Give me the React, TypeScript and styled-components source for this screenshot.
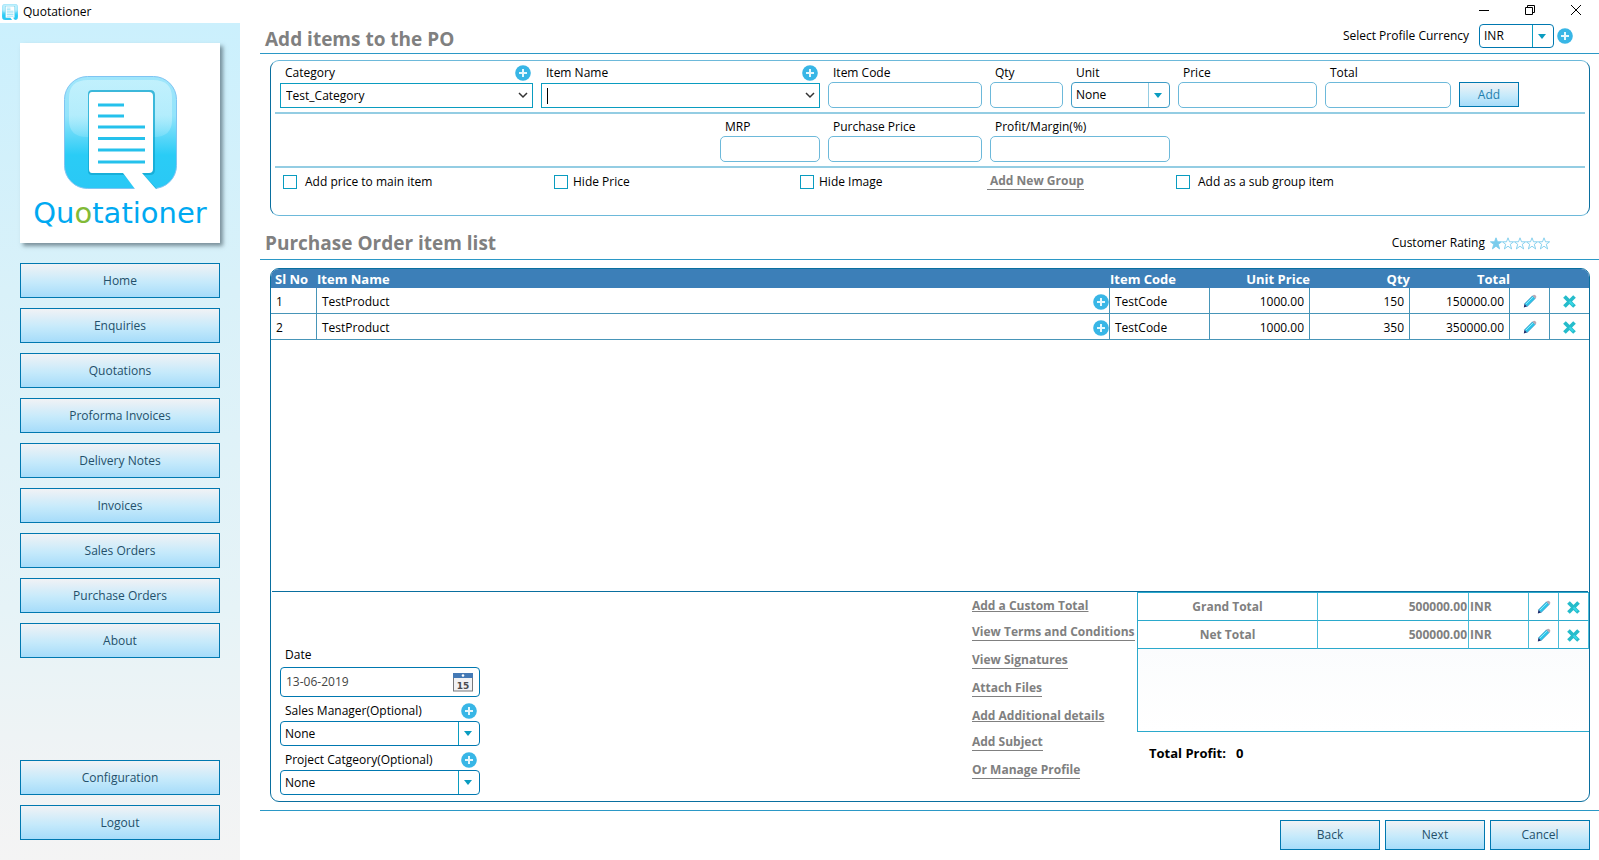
import React from "react";
import styled, { createGlobalStyle, css } from "styled-components";

const c = {
  edge: "#0a6f9f",
  rule: "#2b98c6",
  split: "#94cde3",
  combo: "#0a9cc0",
  field: "#6db9da",
  button: "#0078b0",
  grey: "#808080",
  head: "#3c7fb8",
  cell: "#4795b8",
  total: "#2ba9cc",
};

const Global = createGlobalStyle`
  *, *::before, *::after { box-sizing: border-box; }
  body { margin: 0; background: #fff; }
  body, button, input, select, table {
    font-family: "Open Sans", "Noto Sans", sans-serif;
    font-size: 12px;
    line-height: 16px;
    color: #000;
  }
  button { cursor: pointer; }
`;

/* ---------- shell ---------- */

const Window = styled.div`
  min-height: 100vh;
  display: flex;
  flex-direction: column;
`;

const TitleBar = styled.header`
  height: 23px;
  display: flex;
  justify-content: space-between;
  padding-left: 2px;
`;

const TitleText = styled.span`
  display: flex;
  align-items: center;
  gap: 5px;
`;

const WindowButtons = styled.div`
  display: flex;
`;

const WindowButton = styled.button`
  width: 46px;
  height: 20px;
  padding: 0;
  border: 0;
  background: none;
  display: flex;
  align-items: center;
  justify-content: center;
`;

const Body = styled.div`
  flex: 1;
  display: flex;
`;

const Sidebar = styled.aside`
  flex: 0 0 240px;
  padding: 20px;
  display: flex;
  flex-direction: column;
  background: linear-gradient(#cbf0fd 0%, #d9f1f9 32%, #e6f3f7 70%, #eef3f5 85%, #f4f4f4 100%);
`;

const LogoCard = styled.div`
  height: 200px;
  margin-bottom: 20px;
  padding-top: 33px;
  display: flex;
  flex-direction: column;
  align-items: center;
  background: #fff;
  box-shadow: 3px 3px 4px rgba(60, 80, 90, 0.6);
`;

const WordMark = styled.div`
  font-family: "DejaVu Sans", sans-serif;
  font-size: 29px;
  line-height: 36px;
  margin-top: 6px;
  color: #00a9f1;
`;

const Green = styled.span`
  color: #82ba37;
`;

const Nav = styled.nav`
  flex: 1;
  display: flex;
  flex-direction: column;
  gap: 10px;
`;

const NavSpacer = styled.div`
  flex: 1;
`;

const PushButton = styled.button<{ $accent?: boolean }>`
  border: 1px solid ${c.button};
  padding: 0;
  background: linear-gradient(#f1f2f5 0%, #c6eafb 55%, #a6dcfa 100%);
  color: ${(p) => (p.$accent ? "#1f7fae" : "#24506a")};
`;

const NavButton = styled(PushButton)`
  height: 35px;
  flex: none;
`;

const Main = styled.main`
  flex: 1;
  min-width: 0;
  padding-left: 20px;
  display: flex;
  flex-direction: column;
`;

const SectionHead = styled.div<{ $tall?: boolean }>`
  height: ${(p) => (p.$tall ? 44 : 31)}px;
  padding: ${(p) => (p.$tall ? 0 : 1)}px 26px 0 5px;
  display: flex;
  align-items: ${(p) => (p.$tall ? "flex-end" : "center")};
  border-bottom: 1px solid ${c.rule};
`;

const Title = styled.h2`
  flex: 1;
  margin: 0;
  font-size: 19px;
  line-height: 32px;
  font-weight: 700;
  color: ${c.grey};
`;

const HeadTools = styled.div`
  align-self: flex-start;
  display: flex;
  align-items: center;
  gap: 3px;
`;

const HeadLabel = styled.label`
  margin-right: 7px;
`;

const Rating = styled.div`
  display: flex;
  align-items: center;
  gap: 5px;
  height: 32px;
  margin-right: 23px;
`;

const Stars = styled.span`
  display: flex;
`;

/* ---------- form controls ---------- */

const Label = styled.label`
  padding-left: 5px;
  line-height: 16px;
`;

const LabelRow = styled.div`
  height: 21px;
  padding: 2px 2px 0 0;
  display: flex;
  align-items: center;
  justify-content: space-between;
`;

const Field = styled.div`
  min-width: 0;
  display: flex;
  flex-direction: column;
`;

const TextInput = styled.input`
  width: 100%;
  min-width: 0;
  height: 26px;
  padding: 0 5px;
  border: 1px solid ${c.field};
  border-radius: 5px;
  background: #fff;
  outline: none;
`;

const Combo = styled.div`
  height: 25px;
  margin-top: 1px;
  display: flex;
  align-items: center;
  padding: 0 4px 0 5px;
  border: 1px solid ${c.combo};
  background: #fff;
`;

const bare = css`
  flex: 1;
  min-width: 0;
  border: 0;
  padding: 0;
  background: none;
  outline: none;
  appearance: none;
`;

const BareInput = styled.input`
  ${bare}
`;

const BareSelect = styled.select`
  ${bare}
  align-self: stretch;
`;

const Caret = styled.span`
  width: 1px;
  height: 16px;
  background: #000;
`;

const IconButton = styled.button`
  border: 0;
  padding: 0;
  background: none;
  display: inline-flex;
  align-items: center;
  justify-content: center;
  flex: none;
`;

const DropBox = styled.div<{ $w?: number; $h?: number; $edge?: string; $bar?: string }>`
  width: ${(p) => (p.$w ? p.$w + "px" : "100%")};
  height: ${(p) => p.$h ?? 25}px;
  display: flex;
  align-items: center;
  padding-left: 4px;
  border: 1px solid ${(p) => p.$edge ?? c.button};
  border-radius: 4px;
  background: #fff;

  > span {
    width: 21px;
    align-self: stretch;
    display: flex;
    align-items: center;
    justify-content: center;
    padding-right: 2px;
    border-left: 1px solid ${(p) => p.$bar ?? c.combo};
    pointer-events: none;
  }
`;

/* ---------- add item panel ---------- */

const AddPanel = styled.form`
  margin: 6px 9px 0 10px;
  height: 156px;
  padding: 0 4px;
  border: 1px solid ${c.edge};
  border-top-color: ${c.field};
  border-bottom-color: ${c.field};
  border-radius: 9px;
`;

const FieldGrid = styled.div<{ $first?: boolean }>`
  height: ${(p) => (p.$first ? 53 : 54)}px;
  padding: ${(p) => (p.$first ? 0 : 1)}px 0 0 5px;
  display: grid;
  grid-template-columns: 253fr 279fr 154fr 73fr 99fr 139fr 126fr 60fr 58fr;
  column-gap: 8px;
  align-items: start;
  border-bottom: 2px solid ${c.split};
`;

const MrpField = styled(Field)`
  grid-column: 2;
  justify-self: end;
  width: 100px;
`;

const ProfitField = styled(Field)`
  grid-column: 4 / span 2;
`;

const AddButton = styled(PushButton)`
  height: 25px;
  margin-top: 21px;
`;

const OptionGrid = styled.div`
  height: 27px;
  padding-left: 8px;
  display: grid;
  grid-template-columns: 271fr 246fr 187fr 189fr 409fr;
  align-items: center;
`;

const Option = styled.label<{ $wide?: boolean }>`
  display: flex;
  align-items: center;
  gap: ${(p) => (p.$wide ? 8 : 5)}px;

  input {
    appearance: none;
    width: 14px;
    height: 14px;
    margin: 0;
    border: 1px solid ${c.combo};
    background: #fff;
  }
`;

const TextLink = styled.a<{ $low?: boolean }>`
  align-self: flex-start;
  font-weight: 700;
  color: ${c.grey};
  text-decoration: ${(p) => (p.$low ? "none" : "underline")};
  border-bottom: ${(p) => (p.$low ? `1px solid ${c.grey}` : "0")};
  margin-bottom: ${(p) => (p.$low ? 11 : 10)}px;
`;

const GroupLink = styled.a`
  justify-self: start;
  padding-left: 3px;
  font-weight: 700;
  color: ${c.grey};
  text-decoration: none;
  border-bottom: 1px solid ${c.grey};
`;

/* ---------- item list ---------- */

const ListPanel = styled.section`
  flex: 1;
  margin: 8px 9px 8px 10px;
  display: flex;
  flex-direction: column;
  border: 1px solid ${c.edge};
  border-radius: 9px;
  overflow: hidden;
`;

const ListArea = styled.div`
  flex: 1;
  margin: 0 1px;
  border-bottom: 1px solid ${c.edge};
`;

const ItemTable = styled.table`
  width: calc(100% + 2px);
  margin: 0 -1px;
  border-collapse: separate;
  border-spacing: 0;
  table-layout: fixed;

  th {
    height: 19px;
    padding: 2px 0 0;
    background: ${c.head};
    color: #fff;
    font-size: 13px;
    line-height: 17px;
    text-align: left;
    white-space: nowrap;
  }
  th:first-child {
    padding-left: 4px;
  }
  td {
    height: 26px;
    padding: 2px 5px 0;
    border-right: 1px solid ${c.cell};
    border-bottom: 1px solid ${c.cell};
  }
  td:last-child {
    border-right: 0;
  }
  th.num,
  td.num {
    text-align: right;
  }
  td.icon {
    padding: 0;
    text-align: center;
  }
  button {
    vertical-align: middle;
  }
`;

const NameCell = styled.div`
  display: flex;
  align-items: center;
  justify-content: space-between;
  margin-right: -5px;
`;

const Footer = styled.div`
  height: 209px;
  display: flex;
`;

const FooterForm = styled.div`
  width: 209px;
  padding: 55px 0 0 9px;
  display: flex;
  flex-direction: column;
`;

const FooterLabelRow = styled(LabelRow)<{ $date?: boolean }>`
  height: ${(p) => (p.$date ? 20 : 24)}px;
  padding: ${(p) => (p.$date ? 0 : 4)}px 3px 0 0;
  ${(p) => p.$date && "align-items: flex-start;"}
`;

const DateBox = styled.div`
  height: 30px;
  display: flex;
  align-items: center;
  padding: 0 6px 0 5px;
  border: 1px solid ${c.button};
  border-radius: 4px;
`;

const DateInput = styled.input`
  ${bare}
  color: #444;
`;

const FooterGap = styled.div`
  flex: 1;
`;

const Links = styled.div`
  width: 165px;
  padding-top: 6px;
  display: flex;
  flex-direction: column;
  white-space: nowrap;
`;

const Totals = styled.div`
  width: 452px;
`;

const TotalsBox = styled.div`
  height: 140px;
  border: 1px solid ${c.total};
  border-right: 0;
  background: linear-gradient(#f8fafc, #fff);
`;

const TotalsTable = styled.table`
  width: 100%;
  border-collapse: separate;
  border-spacing: 0;
  table-layout: fixed;
  background: #fff;

  td,
  th {
    height: 28px;
    padding: 0 1px;
    border-right: 1px solid #4cbdd9;
    border-bottom: 1px solid ${c.total};
    font-weight: 700;
    color: ${c.grey};
    text-align: center;
  }
  td.num {
    text-align: right;
  }
  td.unit {
    text-align: left;
  }
  td.icon {
    padding: 0;
  }
  button {
    vertical-align: middle;
  }
`;

const Profit = styled.p`
  margin: 12px 0 0 12px;
  display: flex;
  gap: 10px;
  font-size: 13px;
  line-height: 18px;
  font-weight: 700;
`;

const Actions = styled.div`
  height: 50px;
  padding: 9px 9px 0 0;
  display: flex;
  justify-content: flex-end;
  gap: 5px;
  border-top: 1px solid ${c.rule};
`;

const ActionButton = styled(PushButton)`
  width: 100px;
  height: 30px;
`;

/* ---------- drawings ---------- */

const QuoteMark = ({ size, id }: { size: number; id: string }) => (
  <svg width={size} height={size} viewBox="0 0 113 113" aria-hidden="true">
    <defs>
      <linearGradient id={id} x1="0" y1="0" x2="0" y2="1">
        <stop offset="0" stopColor="#a0e6fb" />
        <stop offset="0.35" stopColor="#93e4fb" />
        <stop offset="0.7" stopColor="#2accf6" />
        <stop offset="1" stopColor="#2ac8f5" />
      </linearGradient>
      <linearGradient id={id + "-gloss"} x1="0" y1="0" x2="0" y2="1">
        <stop offset="0" stopColor="#c9f3fd" stopOpacity="0.8" />
        <stop offset="0.6" stopColor="#c9f3fd" stopOpacity="0.6" />
        <stop offset="1" stopColor="#c9f3fd" stopOpacity="0.2" />
      </linearGradient>
    </defs>
    <rect x="0.5" y="0.5" width="112" height="112" rx="23" fill={`url(#${id})`} stroke="#7fc4f2" />
    <path d="M5 22Q5 4 24 4H89Q108 4 108 22V44Q108 61 90 61H23Q5 61 5 44Z" fill={`url(#${id}-gloss)`} />
    <path d="M28 14H86Q91 14 91 19V94Q91 99 86 99H80L93 113H72L60 99H28Q24 99 24 95V18Q24 14 28 14Z" fill="#12a5cf" opacity="0.75" />
    <path d="M28 16H85Q89 16 89 20V93Q89 97 85 97H78L92 113H71L59 97H28Q25 97 25 93V20Q25 16 28 16Z" fill="#fff" />
    <path d="M34 29H60M34 40H60M34 51H81M34 62.500H81M34 74H81M34 86H81" stroke="#25c1ec" strokeWidth="3" />
  </svg>
);

const Plus = () => (
  <svg width="16" height="16" viewBox="0 0 16 16" aria-hidden="true">
    <circle cx="8" cy="8" r="7.800" fill="#38b6e6" />
    <path d="M8 4V12M4 8H12" stroke="#e4f7fd" strokeWidth="2" />
  </svg>
);

const Chevron = () => (
  <svg width="10" height="7" viewBox="0 0 10 7" fill="none" stroke="#333" strokeWidth="1.500" aria-hidden="true">
    <path d="M1 1L5 5L9 1" />
  </svg>
);

const Triangle = () => (
  <svg width="8" height="5" viewBox="0 0 8 5" aria-hidden="true">
    <path d="M0 0H8L4 5Z" fill="#0a9cc0" />
  </svg>
);

const Pencil = () => (
  <svg width="14" height="14" viewBox="0 0 14 14" aria-hidden="true">
    <path d="M0.800 13.400L1.500 9.800L4.200 12.500Z" fill="#1b2a6b" />
    <path d="M1.500 9.800L9.500 1.800L12.200 4.500L4.200 12.500Z" fill="#2cc5ea" stroke="#3a8ab8" strokeWidth="0.600" />
    <path d="M3 10L10.200 2.800" stroke="#8ceafa" strokeWidth="1" />
    <path d="M9.500 1.800L10.500 0.900Q11.500 0.300 12.700 1.400Q13.700 2.500 13.200 3.500L12.200 4.500Z" fill="#b7a9b4" />
  </svg>
);

const Cross = () => (
  <svg width="13" height="13" viewBox="0 0 14 14" aria-hidden="true">
    <path d="M3 3L11 11M11 3L3 11" stroke="#25bccb" strokeWidth="4" strokeLinecap="square" strokeLinejoin="round" />
    <path d="M7 7L11 11" stroke="#38d8e8" strokeWidth="2" />
  </svg>
);

const Star = ({ on }: { on?: boolean }) => (
  <svg width="12" height="13" viewBox="0 0 12 13" aria-hidden="true">
    <path
      d="M6 0.800L7.500 4.800H11.600L8.300 7.300L9.600 11.900L6 9.200L2.400 11.900L3.700 7.300L0.400 4.800H4.500Z"
      fill={on ? "#7accec" : "#fff"}
      stroke="#7accec"
      strokeWidth="0.900"
    />
  </svg>
);

const CalendarIcon = () => (
  <svg width="20" height="19" viewBox="0 0 20 19" aria-hidden="true">
    <rect x="0.500" y="0.500" width="19" height="17.500" fill="#f2f2f4" stroke="#77787c" />
    <rect x="0" y="0" width="20" height="5" fill="#4479b5" />
    <circle cx="10" cy="2.500" r="1.300" fill="#fff" />
    <text x="10" y="15.500" textAnchor="middle" fontFamily="DejaVu Sans, sans-serif" fontSize="9" fontWeight="700" fill="#4a4a4e">
      15
    </text>
  </svg>
);

const MinimizeIcon = () => (
  <svg width="10" height="10" viewBox="0 0 10 10" aria-hidden="true">
    <path d="M0 5.500H10" stroke="#000" />
  </svg>
);

const RestoreIcon = () => (
  <svg width="10" height="10" viewBox="0 0 10 10" fill="none" stroke="#000" aria-hidden="true">
    <path d="M0.500 2.500H7.500V9.500H0.500ZM2.500 2.500V0.500H9.500V7.500H7.500" />
  </svg>
);

const CloseIcon = () => (
  <svg width="10" height="10" viewBox="0 0 10 10" stroke="#000" aria-hidden="true">
    <path d="M0 0L10 10M10 0L0 10" />
  </svg>
);

/* ---------- pieces ---------- */

const PlusButton = ({ label }: { label: string }) => (
  <IconButton type="button" aria-label={label}>
    <Plus />
  </IconButton>
);

type DropDownProps = { id: string; value: string; w?: number; h?: number; edge?: string; bar?: string };

const DropDown = ({ id, value, w, h, edge, bar }: DropDownProps) => (
  <DropBox $w={w} $h={h} $edge={edge} $bar={bar}>
    <BareSelect id={id} defaultValue={value}>
      <option>{value}</option>
    </BareSelect>
    <span>
      <Triangle />
    </span>
  </DropBox>
);

const LabeledInput = ({ id, label }: { id: string; label: string }) => (
  <>
    <LabelRow>
      <Label htmlFor={id}>{label}</Label>
    </LabelRow>
    <TextInput id={id} />
  </>
);

const navItems = ["Home", "Enquiries", "Quotations", "Proforma Invoices", "Delivery Notes", "Invoices", "Sales Orders", "Purchase Orders", "About"];

const items = [
  { no: 1, name: "TestProduct", code: "TestCode", price: "1000.00", qty: 150, total: "150000.00" },
  { no: 2, name: "TestProduct", code: "TestCode", price: "1000.00", qty: 350, total: "350000.00" },
];

const links = [
  { text: "Add a Custom Total" },
  { text: "View Terms and Conditions", low: true },
  { text: "View Signatures", low: true },
  { text: "Attach Files", low: true },
  { text: "Add Additional details" },
  { text: "Add Subject", low: true },
  { text: "Or Manage Profile", low: true },
];

const totals = [
  { name: "Grand Total", amount: "500000.00" },
  { name: "Net Total", amount: "500000.00" },
];

export default function App() {
  return (
    <Window>
      <Global />
      <TitleBar>
        <TitleText>
          <QuoteMark size={16} id="mark-small" />
          Quotationer
        </TitleText>
        <WindowButtons>
          <WindowButton aria-label="Minimize"><MinimizeIcon /></WindowButton>
          <WindowButton aria-label="Restore"><RestoreIcon /></WindowButton>
          <WindowButton aria-label="Close"><CloseIcon /></WindowButton>
        </WindowButtons>
      </TitleBar>
      <Body>
        <Sidebar>
          <LogoCard>
            <QuoteMark size={113} id="mark-large" />
            <WordMark>
              Qu<Green>o</Green>tationer
            </WordMark>
          </LogoCard>
          <Nav>
            {navItems.map((n) => (
              <NavButton key={n}>{n}</NavButton>
            ))}
            <NavSpacer />
            <NavButton>Configuration</NavButton>
            <NavButton>Logout</NavButton>
          </Nav>
        </Sidebar>
        <Main>
          <SectionHead>
            <Title>Add items to the PO</Title>
            <HeadTools>
              <HeadLabel htmlFor="currency">Select Profile Currency</HeadLabel>
              <DropDown id="currency" value="INR" w={75} h={24} />
              <PlusButton label="Add currency" />
            </HeadTools>
          </SectionHead>

          <AddPanel onSubmit={(e) => e.preventDefault()}>
            <FieldGrid $first>
              <Field>
                <LabelRow>
                  <Label htmlFor="category">Category</Label>
                  <PlusButton label="Add category" />
                </LabelRow>
                <Combo>
                  <BareSelect id="category" defaultValue="Test_Category">
                    <option>Test_Category</option>
                  </BareSelect>
                  <Chevron />
                </Combo>
              </Field>
              <Field>
                <LabelRow>
                  <Label htmlFor="item-name">Item Name</Label>
                  <PlusButton label="Add item name" />
                </LabelRow>
                <Combo>
                  <Caret />
                  <BareInput id="item-name" />
                  <IconButton type="button" aria-label="Show items">
                    <Chevron />
                  </IconButton>
                </Combo>
              </Field>
              <Field><LabeledInput id="item-code" label="Item Code" /></Field>
              <Field><LabeledInput id="qty" label="Qty" /></Field>
              <Field>
                <LabelRow>
                  <Label htmlFor="unit">Unit</Label>
                </LabelRow>
                <DropDown id="unit" value="None" h={26} edge="#3f9cc6" bar={c.split} />
              </Field>
              <Field><LabeledInput id="price" label="Price" /></Field>
              <Field><LabeledInput id="total" label="Total" /></Field>
              <AddButton type="submit" $accent>Add</AddButton>
            </FieldGrid>
            <FieldGrid>
              <MrpField><LabeledInput id="mrp" label="MRP" /></MrpField>
              <Field><LabeledInput id="purchase-price" label="Purchase Price" /></Field>
              <ProfitField><LabeledInput id="margin" label="Profit/Margin(%)" /></ProfitField>
            </FieldGrid>
            <OptionGrid>
              <Option $wide><input type="checkbox" />Add price to main item</Option>
              <Option><input type="checkbox" />Hide Price</Option>
              <Option><input type="checkbox" />Hide Image</Option>
              <GroupLink href="#group">Add New Group</GroupLink>
              <Option $wide><input type="checkbox" />Add as a sub group item</Option>
            </OptionGrid>
          </AddPanel>

          <SectionHead $tall>
            <Title>Purchase Order item list</Title>
            <Rating>
              <span>Customer Rating</span>
              <Stars role="img" aria-label="1 of 5 stars">
                <Star on /><Star /><Star /><Star /><Star />
              </Stars>
            </Rating>
          </SectionHead>

          <ListPanel>
            <ListArea>
              <ItemTable>
                <colgroup>
                  <col width="46" />
                  <col />
                  <col width="100" />
                  <col width="100" />
                  <col width="100" />
                  <col width="100" />
                  <col width="40" />
                  <col width="39" />
                </colgroup>
                <thead>
                  <tr>
                    <th>Sl No</th>
                    <th>Item Name</th>
                    <th>Item Code</th>
                    <th className="num">Unit Price</th>
                    <th className="num">Qty</th>
                    <th className="num">Total</th>
                    <th aria-label="Edit" />
                    <th aria-label="Delete" />
                  </tr>
                </thead>
                <tbody>
                  {items.map((r) => (
                    <tr key={r.no}>
                      <td>{r.no}</td>
                      <td>
                        <NameCell>
                          {r.name}
                          <PlusButton label="Add detail" />
                        </NameCell>
                      </td>
                      <td>{r.code}</td>
                      <td className="num">{r.price}</td>
                      <td className="num">{r.qty}</td>
                      <td className="num">{r.total}</td>
                      <td className="icon"><IconButton aria-label="Edit"><Pencil /></IconButton></td>
                      <td className="icon"><IconButton aria-label="Delete"><Cross /></IconButton></td>
                    </tr>
                  ))}
                </tbody>
              </ItemTable>
            </ListArea>
            <Footer>
              <FooterForm>
                <FooterLabelRow $date>
                  <Label htmlFor="date">Date</Label>
                </FooterLabelRow>
                <DateBox>
                  <DateInput id="date" defaultValue="13-06-2019" />
                  <IconButton aria-label="Pick a date"><CalendarIcon /></IconButton>
                </DateBox>
                <FooterLabelRow>
                  <Label htmlFor="manager">Sales Manager(Optional)</Label>
                  <PlusButton label="Add sales manager" />
                </FooterLabelRow>
                <DropDown id="manager" value="None" />
                <FooterLabelRow>
                  <Label htmlFor="project">Project Catgeory(Optional)</Label>
                  <PlusButton label="Add project category" />
                </FooterLabelRow>
                <DropDown id="project" value="None" />
              </FooterForm>
              <FooterGap />
              <Links>
                {links.map((l) => (
                  <TextLink key={l.text} href="#" $low={l.low}>{l.text}</TextLink>
                ))}
              </Links>
              <Totals>
                <TotalsBox>
                  <TotalsTable>
                    <colgroup>
                      <col width="180" />
                      <col width="151" />
                      <col width="60" />
                      <col width="30" />
                      <col width="30" />
                    </colgroup>
                    <tbody>
                      {totals.map((t) => (
                        <tr key={t.name}>
                          <th scope="row">{t.name}</th>
                          <td className="num">{t.amount}</td>
                          <td className="unit">INR</td>
                          <td className="icon"><IconButton aria-label="Edit"><Pencil /></IconButton></td>
                          <td className="icon"><IconButton aria-label="Delete"><Cross /></IconButton></td>
                        </tr>
                      ))}
                    </tbody>
                  </TotalsTable>
                </TotalsBox>
                <Profit>
                  <span>Total Profit:</span>
                  <span>0</span>
                </Profit>
              </Totals>
            </Footer>
          </ListPanel>

          <Actions>
            <ActionButton>Back</ActionButton>
            <ActionButton>Next</ActionButton>
            <ActionButton>Cancel</ActionButton>
          </Actions>
        </Main>
      </Body>
    </Window>
  );
}
